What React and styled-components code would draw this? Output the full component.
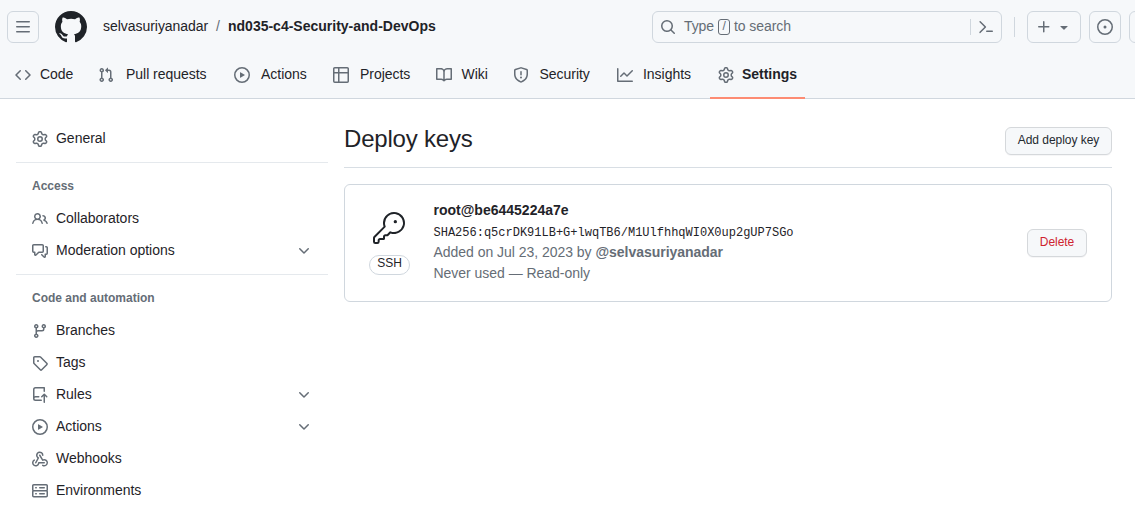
import React from "react";
import styled, { createGlobalStyle } from "styled-components";
import { GoKey } from "react-icons/go";

const GlobalStyle = createGlobalStyle`
  *, *::before, *::after { box-sizing: border-box; }
  html, body { margin: 0; height: 100%; overflow: hidden; background: #fff; }
  body {
    font-family: "Liberation Sans", Arial, sans-serif;
    font-size: 14px;
    line-height: 20px;
    color: #1f2328;
  }
`;

const paths = {
  bars: "M1 2.75A.75.75 0 0 1 1.75 2h12.5a.75.75 0 0 1 0 1.5H1.75A.75.75 0 0 1 1 2.75Zm0 5A.75.75 0 0 1 1.75 7h12.5a.75.75 0 0 1 0 1.5H1.75A.75.75 0 0 1 1 7.75ZM1.75 12h12.5a.75.75 0 0 1 0 1.5H1.75a.75.75 0 0 1 0-1.5Z",
  github: "M8 0c4.42 0 8 3.58 8 8a8.013 8.013 0 0 1-5.45 7.59c-.4.08-.55-.17-.55-.38 0-.27.01-1.13.01-2.2 0-.75-.25-1.23-.54-1.48 1.78-.2 3.65-.88 3.65-3.95 0-.88-.31-1.59-.82-2.15.08-.2.36-1.02-.08-2.12 0 0-.67-.22-2.2.82-.64-.18-1.32-.27-2-.27-.68 0-1.36.09-2 .27-1.53-1.03-2.2-.82-2.2-.82-.44 1.1-.16 1.92-.08 2.12-.51.56-.82 1.28-.82 2.15 0 3.06 1.86 3.75 3.64 3.95-.23.2-.44.55-.51 1.07-.46.21-1.61.55-2.33-.66-.15-.24-.6-.83-1.23-.82-.67.01-.27.38.01.53.34.19.73.9.82 1.13.16.45.68 1.31 2.69.94 0 .67.01 1.3.01 1.49 0 .21-.15.45-.55.38A7.995 7.995 0 0 1 0 8c0-4.42 3.58-8 8-8Z",
  code: "m11.28 3.22 4.25 4.25a.75.75 0 0 1 0 1.06l-4.25 4.25a.749.749 0 0 1-1.275-.326.749.749 0 0 1 .215-.734L13.94 8l-3.72-3.72a.749.749 0 0 1 .326-1.275.749.749 0 0 1 .734.215Zm-6.56 0a.751.751 0 0 1 1.042.018.751.751 0 0 1 .018 1.042L2.06 8l3.72 3.72a.749.749 0 0 1-.326 1.275.749.749 0 0 1-.734-.215L.47 8.53a.75.75 0 0 1 0-1.06Z",
  pull: "M1.5 3.25a2.25 2.25 0 1 1 3 2.122v5.256a2.251 2.251 0 1 1-1.5 0V5.372A2.25 2.25 0 0 1 1.5 3.25Zm5.677-.177L9.573.677A.25.25 0 0 1 10 .854V2.5h1A2.5 2.5 0 0 1 13.5 5v5.628a2.251 2.251 0 1 1-1.5 0V5a1 1 0 0 0-1-1h-1v1.646a.25.25 0 0 1-.427.177L7.177 3.427a.25.25 0 0 1 0-.354ZM3.75 2.5a.75.75 0 1 0 0 1.5.75.75 0 0 0 0-1.5Zm0 9.5a.75.75 0 1 0 0 1.5.75.75 0 0 0 0-1.5Zm8.25.75a.75.75 0 1 0 1.5 0 .75.75 0 0 0-1.5 0Z",
  play: "M8 0a8 8 0 1 1 0 16A8 8 0 0 1 8 0ZM1.5 8a6.5 6.5 0 1 0 13 0 6.5 6.5 0 0 0-13 0Zm4.879-2.773 4.264 2.559a.25.25 0 0 1 0 .428l-4.264 2.559A.25.25 0 0 1 6 10.559V5.442a.25.25 0 0 1 .379-.215Z",
  table: "M0 1.75C0 .784.784 0 1.75 0h12.5C15.216 0 16 .784 16 1.75v12.5A1.75 1.75 0 0 1 14.25 16H1.75A1.75 1.75 0 0 1 0 14.25ZM6.5 6.5v8h7.75a.25.25 0 0 0 .25-.25V6.5Zm8-1.5V1.75a.25.25 0 0 0-.25-.25H6.5V5Zm-13 1.5v7.75c0 .138.112.25.25.25H5v-8ZM5 5V1.5H1.75a.25.25 0 0 0-.25.25V5Z",
  book: "M0 1.75A.75.75 0 0 1 .75 1h4.253c1.227 0 2.317.59 3 1.501A3.743 3.743 0 0 1 11.006 1h4.245a.75.75 0 0 1 .75.75v10.5a.75.75 0 0 1-.75.75h-4.507a2.25 2.25 0 0 0-1.591.659l-.622.621a.75.75 0 0 1-1.06 0l-.622-.621A2.25 2.25 0 0 0 5.258 13H.75a.75.75 0 0 1-.75-.75Zm7.251 10.324.004-5.073-.002-2.253A2.25 2.25 0 0 0 5.003 2.5H1.5v9h3.757a3.75 3.75 0 0 1 1.994.574ZM8.755 4.75l-.004 7.322a3.752 3.752 0 0 1 1.992-.572H14.5v-9h-3.495a2.25 2.25 0 0 0-2.25 2.25Z",
  shield: "M7.467.133a1.748 1.748 0 0 1 1.066 0l5.25 1.68A1.75 1.75 0 0 1 15 3.48V7c0 1.566-.32 3.182-1.303 4.682-.983 1.498-2.585 2.813-5.032 3.855a1.697 1.697 0 0 1-1.33 0c-2.447-1.042-4.049-2.357-5.032-3.855C1.32 10.182 1 8.566 1 7V3.48a1.75 1.75 0 0 1 1.217-1.667Zm.61 1.429a.25.25 0 0 0-.153 0l-5.25 1.68a.25.25 0 0 0-.174.238V7c0 1.358.275 2.666 1.057 3.86.784 1.194 2.121 2.34 4.366 3.297a.196.196 0 0 0 .154 0c2.245-.956 3.582-2.104 4.366-3.298C13.225 9.666 13.5 8.36 13.5 7V3.48a.251.251 0 0 0-.174-.237l-5.25-1.68ZM8.75 4.75v3a.75.75 0 0 1-1.5 0v-3a.75.75 0 0 1 1.5 0ZM9 10.5a1 1 0 1 1-2 0 1 1 0 0 1 2 0Z",
  graph: "M1.5 1.75V13.5h13.75a.75.75 0 0 1 0 1.5H.75a.75.75 0 0 1-.75-.75V1.75a.75.75 0 0 1 1.5 0Zm14.28 2.53-5.25 5.25a.75.75 0 0 1-1.06 0L7 7.06 4.28 9.78a.751.751 0 0 1-1.042-.018.751.751 0 0 1-.018-1.042l3.25-3.25a.75.75 0 0 1 1.06 0L10 7.94l4.72-4.72a.751.751 0 0 1 1.042.018.751.751 0 0 1 .018 1.042Z",
  gear: "M8 0a8.2 8.2 0 0 1 .701.031C9.444.095 9.99.645 10.16 1.29l.288 1.107c.018.066.079.158.212.224.231.114.454.243.668.386.123.082.233.09.299.071l1.103-.303c.644-.176 1.392.021 1.82.63.27.385.506.792.704 1.218.315.675.111 1.422-.364 1.891l-.814.806c-.049.048-.098.147-.088.294.016.257.016.515 0 .772-.01.147.038.246.088.294l.814.806c.475.469.679 1.216.364 1.891a7.977 7.977 0 0 1-.704 1.217c-.428.61-1.176.807-1.82.63l-1.102-.302c-.067-.019-.177-.011-.3.071a5.909 5.909 0 0 1-.668.386c-.133.066-.194.158-.211.224l-.29 1.106c-.168.646-.715 1.196-1.458 1.26a8.006 8.006 0 0 1-1.402 0c-.743-.064-1.289-.614-1.458-1.26l-.289-1.106c-.018-.066-.079-.158-.212-.224a5.738 5.738 0 0 1-.668-.386c-.123-.082-.233-.09-.299-.071l-1.103.303c-.644.176-1.392-.021-1.82-.63a8.12 8.12 0 0 1-.704-1.218c-.315-.675-.111-1.422.363-1.891l.815-.806c.05-.048.098-.147.088-.294a6.214 6.214 0 0 1 0-.772c.01-.147-.038-.246-.088-.294l-.815-.806C.635 6.045.431 5.298.746 4.623a7.92 7.92 0 0 1 .704-1.217c.428-.61 1.176-.807 1.82-.63l1.102.302c.067.019.177.011.3-.071.214-.143.437-.272.668-.386.133-.066.194-.158.211-.224l.29-1.106C6.009.645 6.556.095 7.299.03 7.53.01 7.764 0 8 0Zm-.571 1.525c-.036.003-.108.036-.137.146l-.289 1.105c-.147.561-.549.967-.998 1.189-.173.086-.34.183-.5.29-.417.278-.97.423-1.529.27l-1.103-.303c-.109-.03-.175.016-.195.045-.22.312-.412.644-.573.99-.014.031-.021.11.059.19l.815.806c.411.406.562.957.53 1.456a4.709 4.709 0 0 0 0 .582c.032.499-.119 1.05-.53 1.456l-.815.806c-.081.08-.073.159-.059.19.162.346.353.677.573.989.02.03.085.076.195.046l1.102-.303c.56-.153 1.113-.008 1.53.27.161.107.328.204.501.29.447.222.85.629.997 1.189l.289 1.105c.029.109.101.143.137.146a6.6 6.6 0 0 0 1.142 0c.036-.003.108-.036.137-.146l.289-1.105c.147-.561.549-.967.998-1.189.173-.086.34-.183.5-.29.417-.278.97-.423 1.529-.27l1.103.303c.109.029.175-.016.195-.045.22-.313.411-.644.573-.99.014-.031.021-.11-.059-.19l-.815-.806c-.411-.406-.562-.957-.53-1.456a4.709 4.709 0 0 0 0-.582c-.032-.499.119-1.05.53-1.456l.815-.806c.081-.08.073-.159.059-.19a6.464 6.464 0 0 0-.573-.989c-.02-.03-.085-.076-.195-.046l-1.102.303c-.56.153-1.113.008-1.53-.27a4.44 4.44 0 0 0-.501-.29c-.447-.222-.85-.629-.997-1.189l-.289-1.105c-.029-.11-.101-.143-.137-.146a6.6 6.6 0 0 0-1.142 0ZM11 8a3 3 0 1 1-6 0 3 3 0 0 1 6 0ZM9.5 8a1.5 1.5 0 1 0-3.001.001A1.5 1.5 0 0 0 9.5 8Z",
  people: "M2 5.5a3.5 3.5 0 1 1 5.898 2.549 5.508 5.508 0 0 1 3.034 4.084.75.75 0 1 1-1.482.235 4 4 0 0 0-7.9 0 .75.75 0 0 1-1.482-.236A5.507 5.507 0 0 1 3.102 8.05 3.493 3.493 0 0 1 2 5.5ZM11 4a3.001 3.001 0 0 1 2.22 5.018 5.01 5.01 0 0 1 2.56 3.012.749.749 0 0 1-.885.954.752.752 0 0 1-.549-.514 3.507 3.507 0 0 0-2.522-2.372.75.75 0 0 1-.574-.73v-.352a.75.75 0 0 1 .416-.672A1.5 1.5 0 0 0 11 5.5.75.75 0 0 1 11 4Zm-5.5-.5a2 2 0 1 0-.001 3.999A2 2 0 0 0 5.5 3.5Z",
  discussion: "M1.75 1h8.5c.966 0 1.75.784 1.75 1.75v5.5A1.75 1.75 0 0 1 10.25 10H7.061l-2.574 2.573A1.458 1.458 0 0 1 2 11.543V10h-.25A1.75 1.75 0 0 1 0 8.25v-5.5C0 1.784.784 1 1.75 1ZM1.5 2.75v5.5c0 .138.112.25.25.25h1a.75.75 0 0 1 .75.75v2.19l2.72-2.72a.749.749 0 0 1 .53-.22h3.5a.25.25 0 0 0 .25-.25v-5.5a.25.25 0 0 0-.25-.25h-8.5a.25.25 0 0 0-.25.25Zm13 2a.25.25 0 0 0-.25-.25h-.5a.75.75 0 0 1 0-1.5h.5c.966 0 1.75.784 1.75 1.75v5.5A1.75 1.75 0 0 1 14.25 12H14v1.543a1.458 1.458 0 0 1-2.487 1.03L9.22 12.28a.749.749 0 0 1 .326-1.275.749.749 0 0 1 .734.215l2.22 2.22v-2.19a.75.75 0 0 1 .75-.75h1a.25.25 0 0 0 .25-.25Z",
  branch: "M9.5 3.25a2.25 2.25 0 1 1 3 2.122V6A2.5 2.5 0 0 1 10 8.5H6a1 1 0 0 0-1 1v1.128a2.251 2.251 0 1 1-1.5 0V5.372a2.25 2.25 0 1 1 1.5 0v1.836A2.493 2.493 0 0 1 6 7h4a1 1 0 0 0 1-1v-.628A2.25 2.25 0 0 1 9.5 3.25Zm-6 0a.75.75 0 1 0 1.5 0 .75.75 0 0 0-1.5 0Zm8.25-.75a.75.75 0 1 0 0 1.5.75.75 0 0 0 0-1.5ZM4.25 12a.75.75 0 1 0 0 1.5.75.75 0 0 0 0-1.5Z",
  tag: "M1 7.775V2.75C1 1.784 1.784 1 2.75 1h5.025c.464 0 .91.184 1.238.513l6.25 6.25a1.75 1.75 0 0 1 0 2.474l-5.026 5.026a1.75 1.75 0 0 1-2.474 0l-6.25-6.25A1.752 1.752 0 0 1 1 7.775Zm1.5 0c0 .066.026.13.073.177l6.25 6.25a.25.25 0 0 0 .354 0l5.025-5.025a.25.25 0 0 0 0-.354l-6.25-6.25a.25.25 0 0 0-.177-.073H2.75a.25.25 0 0 0-.25.25ZM6 5a1 1 0 1 1 0 2 1 1 0 0 1 0-2Z",
  push: "M1 2.5A2.5 2.5 0 0 1 3.5 0h8.75a.75.75 0 0 1 .75.75v3.5a.75.75 0 0 1-1.5 0V1.5h-8a1 1 0 0 0-1 1v6.708A2.493 2.493 0 0 1 3.5 9h3.25a.75.75 0 0 1 0 1.5H3.5a1 1 0 0 0 0 2h5.75a.75.75 0 0 1 0 1.5H3.5A2.5 2.5 0 0 1 1 11.5Zm13.23 7.79h-.001l-1.224-1.224v6.184a.75.75 0 0 1-1.5 0V9.066L10.28 10.29a.75.75 0 0 1-1.06-1.061l2.505-2.504a.75.75 0 0 1 1.06 0L15.29 9.23a.751.751 0 0 1-.018 1.042.751.751 0 0 1-1.042.018Z",
  webhook: "M5.5 4.25a2.25 2.25 0 0 1 4.5 0 .75.75 0 0 0 1.5 0 3.75 3.75 0 1 0-6.14 2.889l-2.272 4.258a.75.75 0 0 0 1.324.706L7 7.25a.75.75 0 0 0-.309-1.015A2.25 2.25 0 0 1 5.5 4.25ZM7.364 3.607a.75.75 0 0 1 1.03.257l2.608 4.349a3.75 3.75 0 1 1-.628 6.785.75.75 0 0 1 .752-1.299 2.25 2.25 0 1 0-.033-3.88.75.75 0 0 1-1.03-.256L7.107 4.636a.75.75 0 0 1 .257-1.03ZM2.9 8.776A.75.75 0 0 1 2.625 9.8 2.25 2.25 0 1 0 6 11.75a.75.75 0 0 1 .75-.751h5.5a.75.75 0 0 1 0 1.5H7.425a3.751 3.751 0 1 1-5.55-3.998.75.75 0 0 1 1.024.274Z",
  server: "M1.75 1h12.5c.966 0 1.75.784 1.75 1.75v4c0 .372-.116.717-.314 1 .198.283.314.628.314 1v4a1.75 1.75 0 0 1-1.75 1.75H1.75A1.75 1.75 0 0 1 0 12.75v-4c0-.358.109-.707.314-1a1.739 1.739 0 0 1-.314-1v-4C0 1.784.784 1 1.75 1ZM1.5 2.75v4c0 .138.112.25.25.25h12.5a.25.25 0 0 0 .25-.25v-4a.25.25 0 0 0-.25-.25H1.75a.25.25 0 0 0-.25.25Zm.25 5.75a.25.25 0 0 0-.25.25v4c0 .138.112.25.25.25h12.5a.25.25 0 0 0 .25-.25v-4a.25.25 0 0 0-.25-.25ZM7 4.75A.75.75 0 0 1 7.75 4h4.5a.75.75 0 0 1 0 1.5h-4.5A.75.75 0 0 1 7 4.75ZM7.75 10h4.5a.75.75 0 0 1 0 1.5h-4.5a.75.75 0 0 1 0-1.5ZM3 4.75A.75.75 0 0 1 3.75 4h.5a.75.75 0 0 1 0 1.5h-.5A.75.75 0 0 1 3 4.75ZM3.75 10h.5a.75.75 0 0 1 0 1.5h-.5a.75.75 0 0 1 0-1.5Z",
  chevron: "M12.78 5.22a.749.749 0 0 1 0 1.06l-4.25 4.25a.749.749 0 0 1-1.06 0L3.22 6.28a.749.749 0 1 1 1.06-1.06L8 8.939l3.72-3.719a.749.749 0 0 1 1.06 0Z",
  search: "M10.68 11.74a6 6 0 0 1-7.922-8.982 6 6 0 0 1 8.982 7.922l3.04 3.04a.749.749 0 0 1-.326 1.275.749.749 0 0 1-.734-.215ZM11.5 7a4.499 4.499 0 1 0-8.997 0A4.499 4.499 0 0 0 11.5 7Z",
  command: "m6.354 8.04-4.773 4.773a.75.75 0 1 0 1.061 1.06L7.945 8.57a.75.75 0 0 0 0-1.06L2.642 2.206a.75.75 0 0 0-1.06 1.061L6.353 8.04ZM8.75 11.5a.75.75 0 0 0 0 1.5h5.5a.75.75 0 0 0 0-1.5h-5.5Z",
  plus: "M7.75 2a.75.75 0 0 1 .75.75V7h4.25a.75.75 0 0 1 0 1.5H8.5v4.25a.75.75 0 0 1-1.5 0V8.5H2.75a.75.75 0 0 1 0-1.5H7V2.75A.75.75 0 0 1 7.75 2Z",
  triangle: "m4.427 7.427 3.396 3.396a.25.25 0 0 0 .354 0l3.396-3.396A.25.25 0 0 0 11.396 7H4.604a.25.25 0 0 0-.177.427Z",
  issue: "M8 9.5a1.5 1.5 0 1 0 0-3 1.5 1.5 0 0 0 0 3ZM8 0a8 8 0 1 1 0 16A8 8 0 0 1 8 0ZM1.5 8a6.5 6.5 0 1 0 13 0 6.5 6.5 0 0 0-13 0Z",
};

const Svg = styled.svg`
  display: block;
  flex: none;
  fill: currentColor;
`;

function Icon({ name, size = 16 }) {
  return (
    <Svg width={size} height={size} viewBox="0 0 16 16" aria-hidden="true">
      <path d={paths[name]} />
    </Svg>
  );
}

const Header = styled.header`
  height: 99px;
  background: #f6f8fa;
  border-bottom: 1px solid #d0d7de;
`;

const TopBar = styled.div`
  display: flex;
  align-items: center;
  height: 43px;
  padding: 11px 0 0 7px;
  overflow: hidden;
`;

const IconButton = styled.button`
  display: flex;
  flex: none;
  align-items: center;
  justify-content: center;
  gap: 4px;
  width: ${(p) => p.$width || 32}px;
  height: 32px;
  padding: 0;
  color: #656d76;
  background: transparent;
  border: 1px solid #d0d7de;
  border-radius: 6px;
`;

const Logo = styled.a`
  display: flex;
  margin: 0 16px;
  color: #1f2328;
`;

const Crumbs = styled.div`
  display: flex;
  flex: 1;
  height: 22px;
  white-space: nowrap;
`;

const Owner = styled.span`
  width: 105px;
  letter-spacing: -0.04px;
`;

const Slash = styled.span`
  width: 20px;
  text-align: center;
  color: #656d76;
`;

const Strong = styled.strong`
  font-weight: 700;
`;

const Search = styled.div`
  display: flex;
  flex: none;
  align-items: center;
  width: 350px;
  height: 32px;
  padding: 0 7px;
  color: #656d76;
  border: 1px solid #d0d7de;
  border-radius: 6px;
`;

const SearchHint = styled.div`
  display: flex;
  flex: 1;
  align-items: center;
  margin-left: 8px;
  height: 22px;
`;

const SearchText = styled.span`
  height: 22px;
  letter-spacing: -0.08px;
`;

const SlashKey = styled.kbd`
  display: flex;
  justify-content: center;
  width: 12px;
  height: 16px;
  margin: 0 4px;
  font: 12px/13px "Liberation Sans", Arial, sans-serif;
  border: 1px solid #656d76;
  border-radius: 3px;
`;

const Divider = styled.span`
  flex: none;
  width: 1px;
  height: ${(p) => p.$height}px;
  margin: ${(p) => p.$margin};
  background: #d0d7de;
`;

const Actions = styled.div`
  display: flex;
  flex: none;
  gap: 8px;
  width: 108px;
`;

const Tabs = styled.nav`
  display: flex;
  height: 56px;
  padding-left: 15px;
`;

const Tab = styled.a`
  display: flex;
  flex: none;
  align-items: center;
  width: ${(p) => p.$width}px;
  height: 56px;
  padding: 10px 0 0 ${(p) => (p.$active ? 8 : 0)}px;
  color: #656d76;
  font-weight: ${(p) => (p.$active ? 700 : 400)};
  border-bottom: 2px solid ${(p) => (p.$active ? "#fd8c73" : "transparent")};
`;

const TabLabel = styled.span`
  height: 22px;
  margin-left: ${(p) => p.$gap}px;
  color: #1f2328;
  letter-spacing: -0.03px;
`;

const Body = styled.div`
  display: flex;
  gap: 16px;
  padding: 24px 23px 0 16px;
`;

const Sidebar = styled.nav`
  flex: none;
  width: 312px;
`;

const NavGroup = styled.section`
  & + & {
    margin-top: 7px;
    padding-top: 8px;
    border-top: 1px solid #e5e9ed;
  }
`;

const GroupTitle = styled.h3`
  height: 32px;
  margin: 0;
  padding: 5px 16px 0;
  color: #656d76;
  font-size: 12px;
  font-weight: 700;
  line-height: 20px;
`;

const NavItem = styled.a`
  display: flex;
  align-items: center;
  height: 32px;
  padding: 0 16px;
  color: #656d76;
`;

const NavLabel = styled.span`
  flex: 1;
  height: 22px;
  margin-left: 8px;
  color: #1f2328;
  letter-spacing: -0.02px;
`;

const Main = styled.main`
  flex: 1;
  min-width: 0;
`;

const TitleRow = styled.div`
  display: flex;
  justify-content: space-between;
  height: 45px;
  margin-bottom: 16px;
  border-bottom: 1px solid #d8dee4;
`;

const Title = styled.h2`
  margin: 0;
  font-size: 24px;
  font-weight: 400;
  line-height: 32px;
  letter-spacing: -0.2px;
`;

const Button = styled.button`
  flex: none;
  width: ${(p) => p.$width}px;
  height: 28px;
  margin-top: ${(p) => p.$top || 0}px;
  padding: 0 0 2px;
  color: ${(p) => (p.$danger ? "#cf222e" : "#24292f")};
  font: 12px/20px "Liberation Sans", Arial, sans-serif;
  letter-spacing: -0.04px;
  background: #f6f8fa;
  border: 1px solid #d5d8db;
  border-radius: 6px;
  box-shadow: 0 1px 0 rgba(31, 35, 40, 0.04);
`;

const KeyCard = styled.article`
  display: flex;
  align-items: center;
  height: 118px;
  padding: 0 24px;
  border: 1px solid #d0d7de;
  border-radius: 6px;
`;

const KeyBadge = styled.div`
  display: flex;
  flex-direction: column;
  align-items: center;
  gap: 11px;
  width: 41px;
  margin-right: 23.5px;
`;

const KeyGlyph = styled(GoKey)`
  margin-right: 2px;
`;

const Pill = styled.span`
  height: 20px;
  padding: 0 7px;
  font-size: 12px;
  line-height: 15px;
  border: 1px solid #d0d7de;
  border-radius: 10px;
`;

const KeyInfo = styled.div`
  flex: 1;
  padding-bottom: 2px;
  color: #656d76;
  line-height: 21px;
`;

const KeyName = styled.div`
  color: #1f2328;
  font-weight: 700;
`;

const KeyMeta = styled.div`
  letter-spacing: -0.03px;
`;

const Fingerprint = styled.code`
  display: block;
  height: 21px;
  color: #1f2328;
  font: 12px/24px "Liberation Mono", monospace;
`;

const tabs = [
  { icon: "code", label: "Code", width: 83, gap: 9 },
  { icon: "pull", label: "Pull requests", width: 136, gap: 12 },
  { icon: "play", label: "Actions", width: 99, gap: 11 },
  { icon: "table", label: "Projects", width: 103, gap: 11 },
  { icon: "book", label: "Wiki", width: 77, gap: 9.5 },
  { icon: "shield", label: "Security", width: 104, gap: 10.5 },
  { icon: "graph", label: "Insights", width: 93, gap: 10 },
  { icon: "gear", label: "Settings", width: 95, gap: 8, active: true },
];

const groups = [
  { items: [["gear", "General"]] },
  { title: "Access", items: [["people", "Collaborators"], ["discussion", "Moderation options", true]] },
  {
    title: "Code and automation",
    items: [
      ["branch", "Branches"],
      ["tag", "Tags"],
      ["push", "Rules", true],
      ["play", "Actions", true],
      ["webhook", "Webhooks"],
      ["server", "Environments"],
    ],
  },
];

export default function App() {
  return (
    <>
      <GlobalStyle />
      <Header>
        <TopBar>
          <IconButton aria-label="Menu"><Icon name="bars" /></IconButton>
          <Logo><Icon name="github" size={32} /></Logo>
          <Crumbs>
            <Owner>selvasuriyanadar</Owner>
            <Slash>/</Slash>
            <Strong>nd035-c4-Security-and-DevOps</Strong>
          </Crumbs>
          <Search>
            <Icon name="search" />
            <SearchHint>
              <SearchText>Type</SearchText>
              <SlashKey>/</SlashKey>
              <SearchText>to search</SearchText>
            </SearchHint>
            <Divider $height={16} $margin="0 7px 0 0" />
            <Icon name="command" />
          </Search>
          <Divider $height={20} $margin="0 12px" />
          <Actions>
            <IconButton $width={54} aria-label="Create new">
              <Icon name="plus" />
              <Icon name="triangle" />
            </IconButton>
            <IconButton aria-label="Issues"><Icon name="issue" /></IconButton>
            <IconButton aria-label="Pull requests" />
          </Actions>
        </TopBar>
        <Tabs>
          {tabs.map((t) => (
            <Tab key={t.label} $width={t.width} $active={t.active}>
              <Icon name={t.icon} />
              <TabLabel $gap={t.gap}>{t.label}</TabLabel>
            </Tab>
          ))}
        </Tabs>
      </Header>
      <Body>
        <Sidebar>
          {groups.map((g, i) => (
            <NavGroup key={i}>
              {g.title && <GroupTitle>{g.title}</GroupTitle>}
              {g.items.map(([icon, label, expandable]) => (
                <NavItem key={label}>
                  <Icon name={icon} />
                  <NavLabel>{label}</NavLabel>
                  {expandable && <Icon name="chevron" />}
                </NavItem>
              ))}
            </NavGroup>
          ))}
        </Sidebar>
        <Main>
          <TitleRow>
            <Title>Deploy keys</Title>
            <Button $top={4} $width={107}>Add deploy key</Button>
          </TitleRow>
          <KeyCard>
            <KeyBadge>
              <KeyGlyph size={32} />
              <Pill>SSH</Pill>
            </KeyBadge>
            <KeyInfo>
              <KeyName>root@be6445224a7e</KeyName>
              <Fingerprint>SHA256:q5crDK91LB+G+lwqTB6/M1UlfhhqWI0X0up2gUP7SGo</Fingerprint>
              <KeyMeta>Added on Jul 23, 2023 by <Strong>@selvasuriyanadar</Strong></KeyMeta>
              <KeyMeta>Never used — Read-only</KeyMeta>
            </KeyInfo>
            <Button $danger $width={60}>Delete</Button>
          </KeyCard>
        </Main>
      </Body>
    </>
  );
}
